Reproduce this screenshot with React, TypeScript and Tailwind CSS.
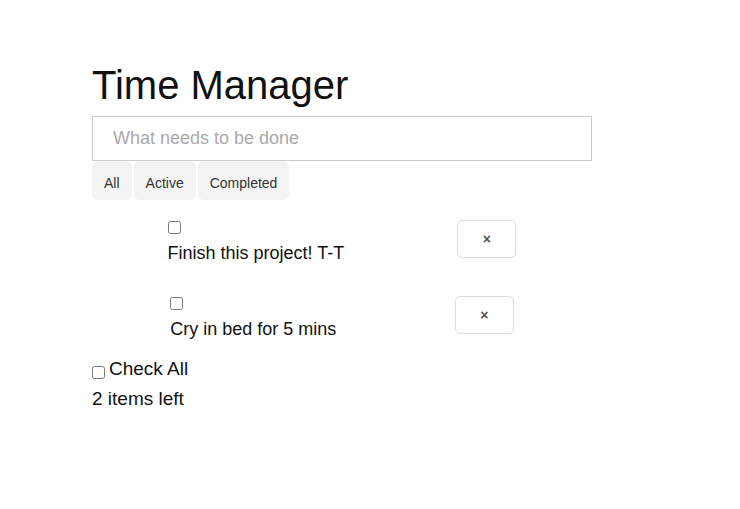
import { useState } from "react";

type Todo = { id: number; text: string; done: boolean };

const initialTodos: Todo[] = [
  { id: 1, text: "Finish this project! T-T", done: false },
  { id: 2, text: "Cry in bed for 5 mins", done: false },
];

export default function App() {
  const [todos, setTodos] = useState<Todo[]>(initialTodos);
  const [filter, setFilter] = useState("all");
  const left = todos.filter((t) => !t.done).length;

  const toggle = (id: number) =>
    setTodos((ts) => ts.map((t) => (t.id === id ? { ...t, done: !t.done } : t)));
  const remove = (id: number) => setTodos((ts) => ts.filter((t) => t.id !== id));
  const checkAll = () => setTodos((ts) => ts.map((t) => ({ ...t, done: true })));

  return (
    <div className="min-h-screen bg-white font-['Liberation_Sans',Arial,sans-serif] text-[#111]">
      <div className="ml-[92px] w-[500px] pt-[62px]">
        <h1 className="text-[40px] leading-[46px] font-light text-[#111] mb-2">
          Time Manager
        </h1>

        <input
          type="text"
          placeholder="What needs to be done"
          className="block w-[500px] h-[45px] border border-[#cccccc] pl-[20px] text-[18px] outline-none placeholder:text-[#aaaaaa]"
        />

        {/* filters */}
        <div className="flex gap-[2px]">
          {["All", "Active", "Completed"].map((f) => (
            <button
              key={f}
              onClick={() => setFilter(f.toLowerCase())}
              className={`h-[39px] px-[12px] pt-[5px] flex items-center rounded-[6px] bg-[#f4f4f4] text-[14px] text-[#333] ${
                filter === f.toLowerCase() ? "" : ""
              }`}
            >
              {f}
            </button>
          ))}
        </div>

        {/* list */}
        <ul className="px-[19px] mt-[20px] flex flex-col gap-[32px]">
          {todos.map((t) => (
            <li key={t.id} className="flex justify-around items-start">
              <div className="flex flex-col items-start">
                <input
                  type="checkbox"
                  checked={t.done}
                  onChange={() => toggle(t.id)}
                  className="mt-[1px] w-[13px] h-[13px]"
                />
                <label className="mt-[9px] text-[18px] leading-[21px]">{t.text}</label>
              </div>
              <button
                onClick={() => remove(t.id)}
                className="w-[59px] h-[38px] flex items-center justify-center rounded-[5px] border border-[#dddddd] bg-white text-[14px] font-bold text-[#555]"
              >
                ×
              </button>
            </li>
          ))}
        </ul>

        <div className="mt-[18px] flex items-start text-[19px] leading-[22px]">
          <input type="checkbox" onChange={checkAll} className="mt-[8px] w-[13px] h-[13px]" />
          <span className="ml-[4px]">Check All</span>
        </div>
        <div className="mt-[8px] text-[19px] leading-[22px]">{left} items left</div>
      </div>
    </div>
  );
}
